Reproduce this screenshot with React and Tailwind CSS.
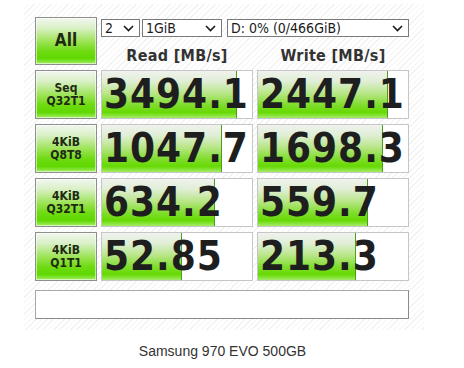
import React from "react";

const rows = [
  { l1: "Seq", l2: "Q32T1", r: "3494.1", rw: 135, w: "2447.1", ww: 130 },
  { l1: "4KiB", l2: "Q8T8", r: "1047.7", rw: 120, w: "1698.3", ww: 125 },
  { l1: "4KiB", l2: "Q32T1", r: "634.2", rw: 113, w: "559.7", ww: 110 },
  { l1: "4KiB", l2: "Q1T1", r: "52.85", rw: 80, w: "213.3", ww: 98 },
];

const FONT = "font-['DejaVu_Sans_Condensed','DejaVu_Sans',sans-serif] font-stretch-condensed";

function Chevron() {
  return (
    <svg width="11" height="7" viewBox="0 0 11 7" className="shrink-0">
      <path d="M1 1 L5.5 5.5 L10 1" fill="none" stroke="#1a1a1a" strokeWidth="1.6" />
    </svg>
  );
}

function Select({ text, w }) {
  return (
    <div
      className={`${w} h-[18px] bg-white border border-[#7a7a7a] flex items-center justify-between pl-[3px] pr-[5px] text-[14px] leading-none text-[#1a1a1a] ${FONT}`}
    >
      <span>{text}</span>
      <Chevron />
    </div>
  );
}

function GreenButton({ children, className = "" }) {
  return (
    <div
      className={`w-[62px] border border-[#8e8e8e] shadow-[inset_0_0_0_1px_rgba(255,255,255,0.55)] bg-[linear-gradient(to_bottom,#f2f7ef_0%,#d9f0c6_22%,#9fe45a_50%,#6fdb12_72%,#5fd800_88%,#a6ee6a_100%)] flex items-center justify-center text-center font-bold text-[#1f2a14] ${FONT} ${className}`}
    >
      {children}
    </div>
  );
}

function Cell({ value, bar }) {
  return (
    <div className="relative w-[152px] h-[49px] bg-white border border-[#c6c6c6] overflow-hidden">
      <div
        className="absolute left-0 top-0 bottom-0 border-r border-[#4c9e1e] bg-[linear-gradient(to_bottom,#f0f2ee_0%,#e0eed6_22%,#b8e686_48%,#80dd2e_72%,#66d902_88%,#a4ec66_100%)]"
        style={{ width: bar }}
      />
      <div
        className={`relative pl-[2px] h-full flex items-center text-[40px] leading-[47px] tracking-[1px] font-bold text-[#1e1e1e] whitespace-nowrap ${FONT}`}
      >
        {value}
      </div>
    </div>
  );
}

export default function App() {
  return (
    <div className="w-[464px] h-[368px] bg-white overflow-hidden">
      <div className="pt-[4px] pl-[24px]">
        <div className="w-[400px] h-[326px] pl-[11px] pt-[13px] bg-[repeating-linear-gradient(135deg,#ffffff_0px,#ffffff_3px,#f2f2f2_3px,#f2f2f2_4px)]">
          <div className="flex gap-[4px] h-[53px]">
            <GreenButton className="h-[48px] text-[17px]">All</GreenButton>
            <div className="w-[308px] flex flex-col">
              <div className="flex mt-[2px]">
                <Select text="2" w="w-[39px]" />
                <div className="w-[2px]" />
                <Select text="1GiB" w="w-[80px]" />
                <div className="w-[5px]" />
                <Select text="D: 0% (0/466GiB)" w="w-[182px]" />
              </div>
              <div className={`flex gap-[4px] pt-[9px] text-[16px] leading-[20px] tracking-[0.3px] font-bold text-[#333333] ${FONT}`}>
                <div className="w-[152px] text-center">Read [MB/s]</div>
                <div className="w-[152px] text-center">Write [MB/s]</div>
              </div>
            </div>
          </div>
          <div className="flex flex-col gap-[5px]">
            {rows.map((row, i) => (
              <div key={i} className="flex gap-[4px] h-[49px]">
                <GreenButton className="h-[49px] text-[12px] leading-[13px]">
                  <div>
                    {row.l1}
                    <br />
                    {row.l2}
                  </div>
                </GreenButton>
                <Cell value={row.r} bar={row.rw} />
                <Cell value={row.w} bar={row.ww} />
              </div>
            ))}
          </div>
          <div className="mt-[9px] w-[374px] h-[29px] bg-white border border-[#a8a8a8] border-r-[#8a8a8a] border-b-[#8a8a8a]" />
        </div>
      </div>
      <div className="w-[445px] mt-[13px] text-center text-[14px] leading-[16px] text-[#333333] font-['Liberation_Sans',Arial,sans-serif]">
        Samsung 970 EVO 500GB
      </div>
    </div>
  );
}
